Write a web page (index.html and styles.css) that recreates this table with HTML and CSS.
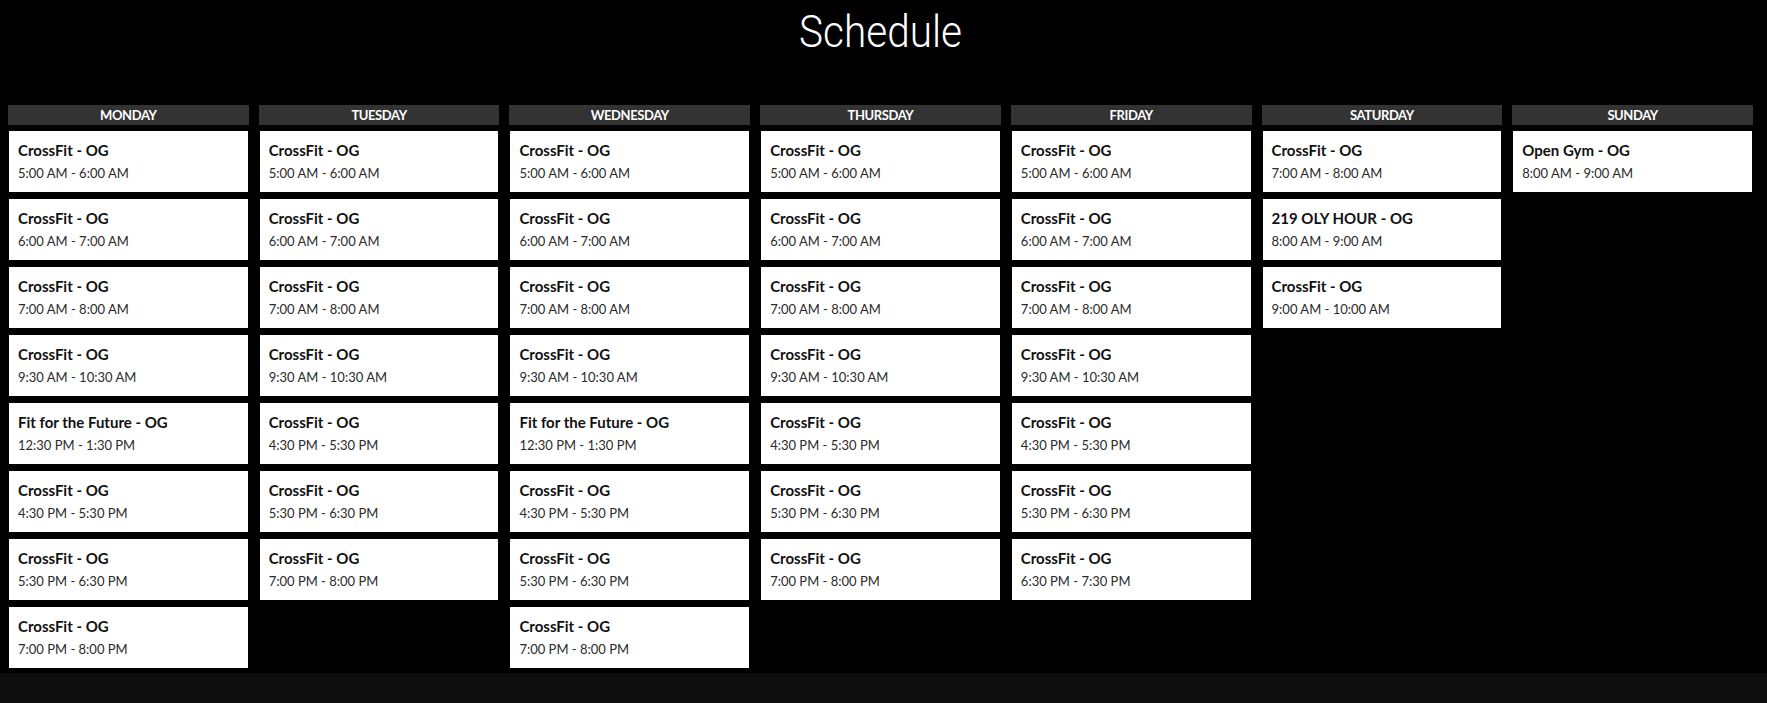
FILE: index.html
```html
<!DOCTYPE html>
<html lang="en">
<head>
<meta charset="utf-8">
<title>Schedule</title>
<link rel="stylesheet" href="styles.css">
</head>
<body>
<section class="schedule">
  <h1 class="title">Schedule</h1>
  <div class="week">
    <div class="day">
      <div class="day-head">MONDAY</div>
      <div class="slot"><div class="name">CrossFit - OG</div><div class="time">5:00 AM - 6:00 AM</div></div>
      <div class="slot"><div class="name">CrossFit - OG</div><div class="time">6:00 AM - 7:00 AM</div></div>
      <div class="slot"><div class="name">CrossFit - OG</div><div class="time">7:00 AM - 8:00 AM</div></div>
      <div class="slot"><div class="name">CrossFit - OG</div><div class="time">9:30 AM - 10:30 AM</div></div>
      <div class="slot"><div class="name">Fit for the Future - OG</div><div class="time">12:30 PM - 1:30 PM</div></div>
      <div class="slot"><div class="name">CrossFit - OG</div><div class="time">4:30 PM - 5:30 PM</div></div>
      <div class="slot"><div class="name">CrossFit - OG</div><div class="time">5:30 PM - 6:30 PM</div></div>
      <div class="slot"><div class="name">CrossFit - OG</div><div class="time">7:00 PM - 8:00 PM</div></div>
    </div>
    <div class="day">
      <div class="day-head">TUESDAY</div>
      <div class="slot"><div class="name">CrossFit - OG</div><div class="time">5:00 AM - 6:00 AM</div></div>
      <div class="slot"><div class="name">CrossFit - OG</div><div class="time">6:00 AM - 7:00 AM</div></div>
      <div class="slot"><div class="name">CrossFit - OG</div><div class="time">7:00 AM - 8:00 AM</div></div>
      <div class="slot"><div class="name">CrossFit - OG</div><div class="time">9:30 AM - 10:30 AM</div></div>
      <div class="slot"><div class="name">CrossFit - OG</div><div class="time">4:30 PM - 5:30 PM</div></div>
      <div class="slot"><div class="name">CrossFit - OG</div><div class="time">5:30 PM - 6:30 PM</div></div>
      <div class="slot"><div class="name">CrossFit - OG</div><div class="time">7:00 PM - 8:00 PM</div></div>
    </div>
    <div class="day">
      <div class="day-head">WEDNESDAY</div>
      <div class="slot"><div class="name">CrossFit - OG</div><div class="time">5:00 AM - 6:00 AM</div></div>
      <div class="slot"><div class="name">CrossFit - OG</div><div class="time">6:00 AM - 7:00 AM</div></div>
      <div class="slot"><div class="name">CrossFit - OG</div><div class="time">7:00 AM - 8:00 AM</div></div>
      <div class="slot"><div class="name">CrossFit - OG</div><div class="time">9:30 AM - 10:30 AM</div></div>
      <div class="slot"><div class="name">Fit for the Future - OG</div><div class="time">12:30 PM - 1:30 PM</div></div>
      <div class="slot"><div class="name">CrossFit - OG</div><div class="time">4:30 PM - 5:30 PM</div></div>
      <div class="slot"><div class="name">CrossFit - OG</div><div class="time">5:30 PM - 6:30 PM</div></div>
      <div class="slot"><div class="name">CrossFit - OG</div><div class="time">7:00 PM - 8:00 PM</div></div>
    </div>
    <div class="day">
      <div class="day-head">THURSDAY</div>
      <div class="slot"><div class="name">CrossFit - OG</div><div class="time">5:00 AM - 6:00 AM</div></div>
      <div class="slot"><div class="name">CrossFit - OG</div><div class="time">6:00 AM - 7:00 AM</div></div>
      <div class="slot"><div class="name">CrossFit - OG</div><div class="time">7:00 AM - 8:00 AM</div></div>
      <div class="slot"><div class="name">CrossFit - OG</div><div class="time">9:30 AM - 10:30 AM</div></div>
      <div class="slot"><div class="name">CrossFit - OG</div><div class="time">4:30 PM - 5:30 PM</div></div>
      <div class="slot"><div class="name">CrossFit - OG</div><div class="time">5:30 PM - 6:30 PM</div></div>
      <div class="slot"><div class="name">CrossFit - OG</div><div class="time">7:00 PM - 8:00 PM</div></div>
    </div>
    <div class="day">
      <div class="day-head">FRIDAY</div>
      <div class="slot"><div class="name">CrossFit - OG</div><div class="time">5:00 AM - 6:00 AM</div></div>
      <div class="slot"><div class="name">CrossFit - OG</div><div class="time">6:00 AM - 7:00 AM</div></div>
      <div class="slot"><div class="name">CrossFit - OG</div><div class="time">7:00 AM - 8:00 AM</div></div>
      <div class="slot"><div class="name">CrossFit - OG</div><div class="time">9:30 AM - 10:30 AM</div></div>
      <div class="slot"><div class="name">CrossFit - OG</div><div class="time">4:30 PM - 5:30 PM</div></div>
      <div class="slot"><div class="name">CrossFit - OG</div><div class="time">5:30 PM - 6:30 PM</div></div>
      <div class="slot"><div class="name">CrossFit - OG</div><div class="time">6:30 PM - 7:30 PM</div></div>
    </div>
    <div class="day">
      <div class="day-head">SATURDAY</div>
      <div class="slot"><div class="name">CrossFit - OG</div><div class="time">7:00 AM - 8:00 AM</div></div>
      <div class="slot"><div class="name">219 OLY HOUR - OG</div><div class="time">8:00 AM - 9:00 AM</div></div>
      <div class="slot"><div class="name">CrossFit - OG</div><div class="time">9:00 AM - 10:00 AM</div></div>
    </div>
    <div class="day">
      <div class="day-head">SUNDAY</div>
      <div class="slot"><div class="name">Open Gym - OG</div><div class="time">8:00 AM - 9:00 AM</div></div>
    </div>
  </div>
</section>
</body>
</html>
```

FILE: styles.css
```css
html, body {
  margin: 0;
  padding: 0;
}

body {
  background: #0e0e0e;
  font-family: "Lato", "Noto Sans", sans-serif;
}

.schedule {
  background: #000;
  padding: 5px 14px 5px 8px;
}

.title {
  margin: 0;
  text-align: center;
  color: #fff;
  font-family: "Roboto", "Liberation Sans", sans-serif;
  font-weight: 300;
  font-size: 45px;
  line-height: 54px;
  transform: scaleX(0.9);
}

.week {
  margin-top: 46px;
  display: grid;
  grid-template-columns: repeat(7, 1fr);
  column-gap: 10px;
  align-items: start;
}

.day {
  display: flex;
  flex-direction: column;
  gap: 7px;
}

.day-head {
  background: #333333;
  color: #fff;
  height: 20px;
  line-height: 20px;
  text-align: center;
  font-weight: 700;
  font-size: 13px;
  letter-spacing: -0.4px;
  margin-bottom: -1px;
}

.slot {
  background: #fff;
  margin: 0 1px;
  height: 61px;
  box-sizing: border-box;
  padding: 9px 9px 0;
}

.name {
  color: #111;
  font-weight: 700;
  font-size: 15px;
  line-height: 20px;
}

.time {
  margin-top: 2px;
  color: #2a2a2a;
  font-weight: 400;
  font-size: 13px;
  line-height: 22px;
}
```
